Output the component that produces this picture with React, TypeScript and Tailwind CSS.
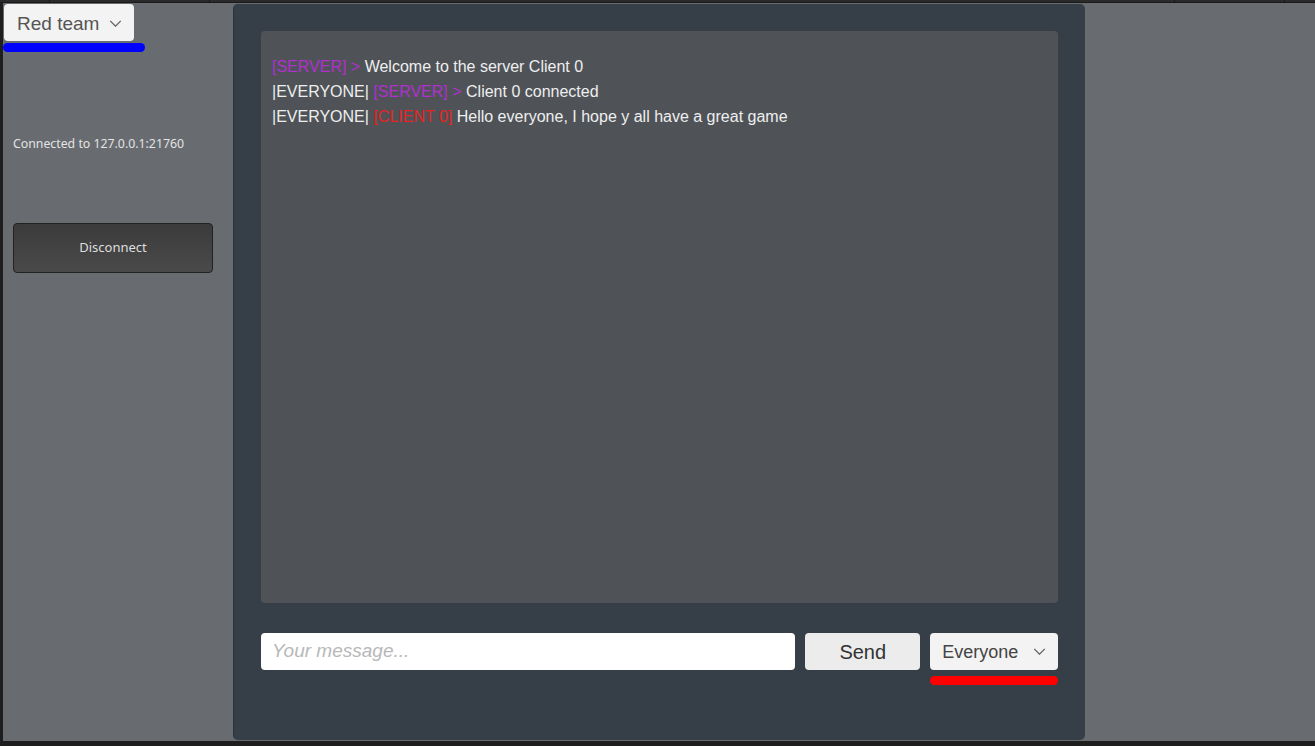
const Chevron = ({ className }: { className?: string }) => (
  <svg viewBox="0 0 14 8" className={className} fill="none" stroke="currentColor" strokeWidth="1.6">
    <path d="M1 1l6 6 6-6" />
  </svg>
);

const messages = [
  { scope: "", tag: "[SERVER] >", tagColor: "text-[#b12fcf]", text: "Welcome to the server Client 0" },
  { scope: "|EVERYONE| ", tag: "[SERVER] >", tagColor: "text-[#b12fcf]", text: "Client 0 connected" },
  { scope: "|EVERYONE| ", tag: "[CLIENT 0]", tagColor: "text-[#e8231f]", text: "Hello everyone, I hope y all have a great game" },
];

const App = () => {
  return (
    <div className="w-[1315px] h-[746px] bg-[#1e1e1e] flex flex-col overflow-hidden font-['Liberation_Sans',Arial,sans-serif]">
      <div className="h-[3px] flex bg-[#2a2a2a] border-b border-[#1a1a1a]">
        <div className="w-[50px] border-r border-[#161616]" />
        <div className="w-[160px] border-r border-[#161616]" />
        <div className="w-[965px] border-r border-[#161616]" />
        <div className="w-[110px] border-r border-[#161616]" />
      </div>
      <div className="flex h-[738px] ml-[3px] bg-[#686b70]">
        <div className="w-[230px] flex flex-col">
          <div className="ml-[1px] mt-[1px] w-[130px] h-[37px] bg-[#f3f3f3] rounded-[4px] flex items-center pl-[13px] pr-[12px] justify-between">
            <span className="text-[19px] text-[#555] pt-[3px]">Red team</span>
            <Chevron className="w-[13px] h-[7px] text-[#666] mt-[1px]" />
          </div>
          <div className="mt-[2px] w-[142px] h-[9px] bg-[#0000ff] rounded-full" />
          <p className="mt-[84px] ml-[10px] text-[12.3px] leading-[16px] text-[#e4e4e4] font-['Noto_Sans',sans-serif]">
            Connected to 127.0.0.1:21760
          </p>
          <button className="mt-[71px] ml-[10px] w-[200px] h-[50px] rounded-[4px] border border-[#222] bg-gradient-to-b from-[#3b3b3b] to-[#4a4a4a] text-[13px] text-[#dedede] font-['Noto_Sans',sans-serif]">
            Disconnect
          </button>
        </div>
        <div className="w-[852px] my-[1px] bg-[#363f48] rounded-[5px] border-l border-[#2c333a] px-[27px] pt-[27px] flex flex-col">
          <div className="h-[572px] bg-[#4f5358] rounded-[4px] pt-[23px] pl-[11px] text-[16px] leading-[25px] text-[#eeeeee]">
            {messages.map((m, i) => (
              <div key={i}>
                {m.scope}
                <span className={m.tagColor}>{m.tag}</span> {m.text}
              </div>
            ))}
          </div>
          <div className="mt-[30px] flex items-start gap-[10px]">
            <div className="w-[535px] h-[37px] bg-white rounded-[4px] flex items-center pl-[11px]">
              <span className="italic text-[19px] text-[#b8b8b8]">Your message...</span>
            </div>
            <button className="w-[115px] h-[37px] bg-[#ececec] rounded-[4px] text-[20px] text-[#333]">Send</button>
            <div className="flex flex-col w-[128px]">
              <div className="h-[37px] bg-[#f3f3f3] rounded-[4px] flex items-center justify-between pl-[12px] pr-[12px]">
                <span className="text-[18px] text-[#444] pt-[1px]">Everyone</span>
                <Chevron className="w-[13px] h-[7px] text-[#666]" />
              </div>
              <div className="mt-[6px] h-[9px] bg-[#ff0000] rounded-full" />
            </div>
          </div>
        </div>
      </div>
    </div>
  );
};

export default App;
